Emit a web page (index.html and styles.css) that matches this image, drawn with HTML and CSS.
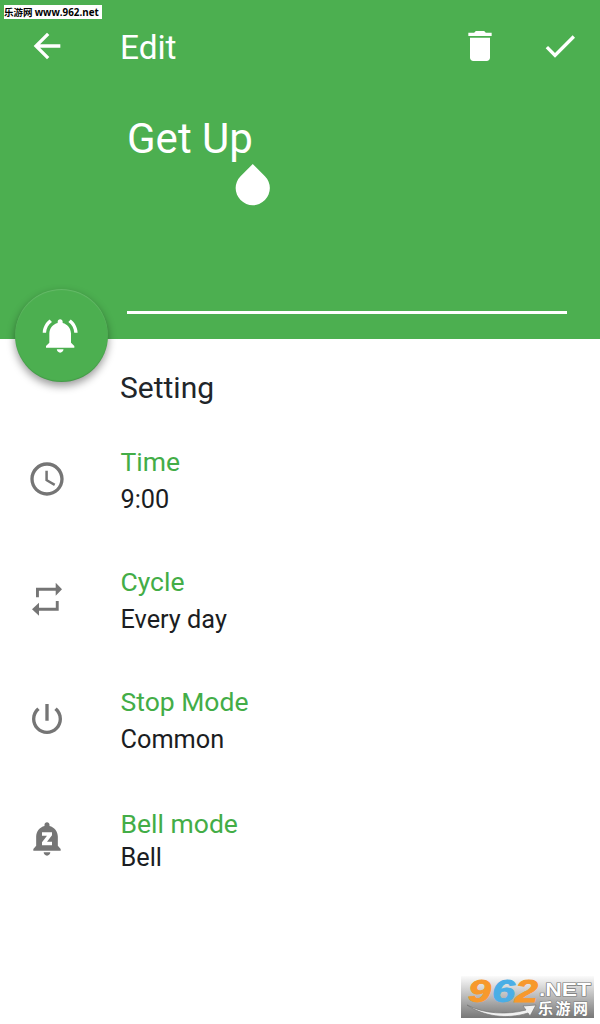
FILE: index.html
```html
<!DOCTYPE html>
<html lang="en">
<head>
<meta charset="utf-8">
<title>Edit</title>
<link rel="stylesheet" href="styles.css">
</head>
<body>
<div class="screen">
  <header class="header">
    <div class="site-tag">乐游网 <span class="site-url">www.962.net</span></div>
    <nav class="toolbar">
      <svg class="icon" viewBox="0 0 24 24"><path d="M20 11H7.83l5.59-5.59L12 4l-8 8 8 8 1.41-1.41L7.83 13H20v-2z"/></svg>
      <h1 class="title">Edit</h1>
      <svg class="icon" viewBox="0 0 24 24"><path d="M6 19c0 1.1.9 2 2 2h8c1.1 0 2-.9 2-2V7H6v12zM19 4h-3.5l-1-1h-5l-1 1H5v2h14V4z"/></svg>
      <svg class="icon icon-check" viewBox="0 0 24 24"><path d="M9 16.17L4.83 12l-1.42 1.41L9 19 21 7l-1.41-1.41z"/></svg>
    </nav>
    <div class="name-field"><span class="name">Get Up</span><span class="cursor-handle"></span></div>
    <div class="fab">
      <svg class="icon" viewBox="0 0 24 24"><path d="M6.58 3.58L5.15 2.15C2.76 3.97 1.18 6.8 1.03 10h2c.15-2.65 1.51-4.97 3.55-6.42zM19.97 10h2c-.15-3.2-1.73-6.03-4.13-7.85l-1.43 1.43c2.05 1.45 3.41 3.77 3.56 6.42zM18 10.5c0-3.07-2.13-5.64-5-6.32V3.5c0-.83-.67-1.5-1.5-1.5S10 2.67 10 3.5v.68c-2.87.68-5 3.25-5 6.32V16l-2 2v1h17v-1l-2-2v-5.5zM11.5 22c1.1 0 2-.9 2-2h-4c0 1.1.9 2 2 2z"/></svg>
    </div>
  </header>
  <main class="settings">
    <h2 class="heading">Setting</h2>
    <section class="row">
      <svg class="icon" viewBox="0 0 24 24"><path d="M11.99 2C6.47 2 2 6.48 2 12s4.47 10 9.99 10C17.52 22 22 17.52 22 12S17.52 2 11.99 2zM12 20c-4.42 0-8-3.58-8-8s3.58-8 8-8 8 3.58 8 8-3.58 8-8 8zM12.5 7H11v6l5.25 3.15.75-1.23-4.5-2.67z"/></svg>
      <div class="texts"><div class="label">Time</div><div class="value">9:00</div></div>
    </section>
    <section class="row">
      <svg class="icon" viewBox="0 0 40 40"><path d="M9 18.3V8.7h19.7V3.7L35 10.2l-6.3 6.5v-5H11.9v6.6zM31.7 22v9.8H12v4.9l-7-6.5 7-6.5v5.1h16.8V22z"/></svg>
      <div class="texts"><div class="label">Cycle</div><div class="value">Every day</div></div>
    </section>
    <section class="row">
      <svg class="icon" viewBox="0 0 24 24"><path d="M13 3h-2v10h2V3zm4.83 2.17l-1.42 1.42C17.99 7.86 19 9.81 19 12c0 3.87-3.13 7-7 7s-7-3.13-7-7c0-2.19 1.01-4.14 2.58-5.42L6.17 5.17C4.23 6.82 3 9.26 3 12c0 4.97 4.03 9 9 9s9-4.03 9-9c0-2.74-1.23-5.18-3.17-6.83z"/></svg>
      <div class="texts"><div class="label">Stop Mode</div><div class="value">Common</div></div>
    </section>
    <section class="row row-bell">
      <svg class="icon" viewBox="-.5 0 24 24"><path d="M11.5 22c1.1 0 2-.9 2-2h-4c0 1.1.9 2 2 2zm6.5-6v-5.5c0-3.07-2.13-5.64-5-6.32V3.5c0-.83-.67-1.5-1.5-1.5S10 2.67 10 3.5v.68c-2.87.68-5 3.25-5 6.32V16l-1.7 2v1h16.4v-1l-1.7-2zm-3.5-6.2l-3 3.9h3V15.7h-6v-1.8l3-3.9h-3V8h6v1.8z"/></svg>
      <div class="texts"><div class="label">Bell mode</div><div class="value">Bell</div></div>
    </section>
  </main>
  <div class="watermark">
    <svg class="watermark-art" viewBox="0 0 133 42">
      <defs>
        <linearGradient id="shade" x1="0" y1="0" x2="0" y2="1"><stop offset="0" stop-color="#fbfbfb"/><stop offset="1" stop-color="#777"/></linearGradient>
      </defs>
      <rect width="133" height="42" fill="url(#shade)"/>
      <g class="digits">
        <text x="7" y="26" textLength="23" lengthAdjust="spacingAndGlyphs" fill="#f7992c" stroke="#f7992c">9</text>
        <text x="31" y="26" textLength="23" lengthAdjust="spacingAndGlyphs" fill="#4aaee6" stroke="#4aaee6">6</text>
        <text x="54" y="26" textLength="23" lengthAdjust="spacingAndGlyphs" fill="#f7992c" stroke="#f7992c">2</text>
      </g>
      <path d="M6 29c17 9 40 10 59 5l-3-4 13-1-6 11-2-3c-22 7-45 3-61-8z" fill="#f1f1f1" stroke="#777" stroke-width=".7"/>
      <text class="net" x="78" y="20" textLength="52" lengthAdjust="spacingAndGlyphs">.NET</text>
      <text class="cjk" x="77" y="38" textLength="50">乐游网</text>
    </svg>
  </div>
</div>
</body>
</html>
```
FILE: styles.css
```css
body {
  margin: 0;
  background: #fff;
  font-family: Roboto, "Noto Sans CJK SC", sans-serif;
}
.screen {
  position: relative;
  width: 600px;
  height: 1024px;
  overflow: hidden;
}
.header {
  position: relative;
  box-sizing: border-box;
  height: 339px;
  padding-top: 22px;
  background: #4caf50;
  color: #fff;
}
.site-tag {
  position: absolute;
  left: 4px;
  top: 5px;
  width: 98px;
  height: 14px;
  background: #fff;
  color: #000;
  font: bold 9.5px/15px "Noto Sans CJK SC", sans-serif;
  white-space: nowrap;
}
.site-url {
  font-family: "Open Sans", sans-serif;
  font-size: 9.8px;
}
.icon {
  display: block;
  flex: none;
  width: 40px;
  height: 40px;
  fill: currentColor;
}
.toolbar {
  display: flex;
  align-items: center;
  height: 48px;
  padding: 0 20px 0 27px;
}
.icon-check { margin-left: 40px; }
.title {
  flex: 1;
  margin: 4px 0 0 53px;
  font-size: 33.4px;
  line-height: 40px;
  font-weight: 400;
}
.name-field {
  position: relative;
  box-sizing: border-box;
  width: 440px;
  height: 203px;
  margin: 41px 0 0 127px;
  border-bottom: 3px solid #fff;
}
.name {
  display: block;
  font-size: 42px;
  line-height: 56px;
}
.cursor-handle {
  position: absolute;
  left: 109px;
  top: 60px;
  width: 33.5px;
  height: 33.5px;
  background: #fff;
  border-radius: 0 50% 50% 50%;
  transform: rotate(45deg);
}
.fab {
  position: absolute;
  left: 15px;
  top: 289px;
  display: grid;
  place-items: center;
  width: 93px;
  height: 93px;
  border-radius: 50%;
  background: #4caf50;
  box-shadow: 0 4px 9px rgba(0, 0, 0, .4), inset 0 1px 1px rgba(255, 255, 255, .15), inset 0 -1px 1px rgba(0, 0, 0, .12);
}
.fab .icon { margin-right: 1px; }
.settings { padding: 28px 27px 0; }
.heading {
  margin: 0 0 22px 93px;
  color: #212529;
  font-size: 30px;
  line-height: 41px;
  height: 40px;
  font-weight: 400;
}
.row {
  display: flex;
  align-items: center;
  gap: 53.5px;
  height: 100px;
  margin-bottom: 20px;
  color: #757575;
}
.texts { padding-top: 4px; }
.label {
  color: #43ad47;
  font-size: 26.5px;
  line-height: 38px;
}
.value {
  color: #1b1d22;
  font-size: 25.3px;
  line-height: 38px;
}
.row-bell .texts { padding-top: 2px; }
.row-bell .label { line-height: 35px; }
.row-bell .value { line-height: 34px; }
.watermark {
  position: absolute;
  left: 461px;
  top: 976px;
}
.watermark-art {
  display: block;
  width: 133px;
  height: 42px;
}
.digits {
  font: italic bold 32px/1 "Liberation Sans", sans-serif;
  stroke-width: .8px;
}
.net {
  font: bold 19px/1 "Liberation Sans", sans-serif;
  fill: #fff;
  stroke: #777;
  stroke-width: 1.2px;
  paint-order: stroke;
}
.cjk {
  font: bold 15px/1 "Noto Sans CJK SC", sans-serif;
  fill: #fff;
  stroke: #777;
  stroke-width: 1px;
  paint-order: stroke;
}
```
